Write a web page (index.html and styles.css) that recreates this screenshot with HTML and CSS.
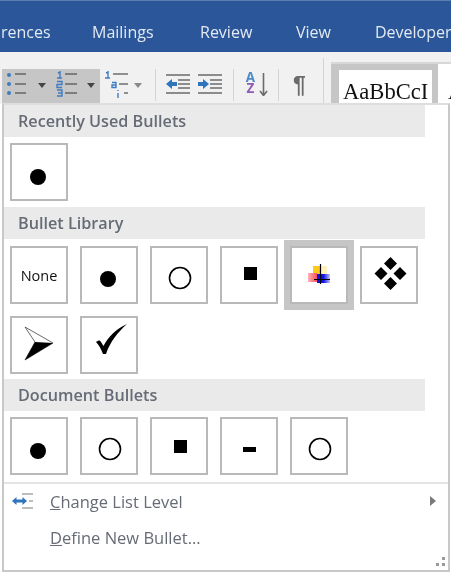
FILE: index.html
```html
<!DOCTYPE html>
<html lang="en">
<head>
<meta charset="utf-8">
<title>Bullet Library</title>
<link rel="stylesheet" href="styles.css">
</head>
<body>
<div class="tabs">
  <span class="tab tab-refs">rences</span>
  <span class="tab tab-mail">Mailings</span>
  <span class="tab tab-review">Review</span>
  <span class="tab tab-view">View</span>
  <span class="tab tab-dev">Developer</span>
</div>
<div class="ribbon">
  <div class="active-group">
    <svg class="icon" width="44" height="30" viewBox="0 0 44 30">
      <g fill="#3f7cc0"><circle cx="7" cy="6" r="2"/><circle cx="7" cy="15" r="2"/><circle cx="7" cy="24" r="2"/></g>
      <g stroke="#666" stroke-width="1.5"><path d="M13 5h11M13 15h11M13 24h11"/></g>
      <path d="M36 14h8l-4 5z" fill="#444"/>
    </svg>
    <svg class="icon icon-numbered" width="48" height="30" viewBox="0 0 48 30">
      <g fill="none" stroke="#3f7cc0" stroke-width="1.400"><path d="M2 4l2-1v6M1 9h5M1 12.500h5v3H1v3h5M1 21h5v3H2h4v3H1"/></g>
      <g stroke="#666" stroke-width="1.500"><path d="M9 5h12M9 15h12M9 24h12"/></g>
      <path d="M31 14h8l-4 5z" fill="#444"/>
    </svg>
  </div>
  <svg class="icon multi" width="44" height="30" viewBox="0 0 44 30">
    <g fill="none" stroke="#3f7cc0" stroke-width="1.400"><path d="M4 4l2-1v6M3 9h5M10 13.500h4v5h-4v-2.500h4M16 21v1M16 24v5"/></g>
    <g stroke="#6f6f6f" stroke-width="1.500"><path d="M11 5h15M17 15h9M22 24h4"/></g>
    <path d="M32 14h8l-4 5z" fill="#8a8a8a"/>
  </svg>
  <span class="sep sep-a"></span>
  <svg class="icon indent" width="24" height="20" viewBox="0 0 24 20">
    <g stroke="#6b6b6b" stroke-width="1.500"><path d="M0 1h24M12 6h12M12 10h12M12 14h12M0 19h24"/></g>
    <path d="M0 10l6-5v3h5v4H6v3z" fill="#2f75bb"/>
  </svg>
  <svg class="icon indent" width="24" height="20" viewBox="0 0 24 20">
    <g stroke="#6b6b6b" stroke-width="1.500"><path d="M0 1h24M12 6h12M12 10h12M12 14h12M0 19h24"/></g>
    <path d="M11 10L5 5v3H0v4h5v3z" fill="#2f75bb"/>
  </svg>
  <span class="sep sep-b"></span>
  <span class="sort">
    <span class="sort-letters"><span class="sort-a">A</span><span class="sort-z">Z</span></span>
    <svg class="sort-arrow" width="9" height="24" viewBox="0 0 9 24"><path d="M4.500 1v22M1 19l3.500 4.500L8 19" fill="none" stroke="#6b6b6b" stroke-width="1.600"/></svg>
  </span>
  <span class="sep sep-c"></span>
  <span class="pilcrow">¶</span>
  <span class="sep sep-d"></span>
  <div class="gallery">
    <div class="style-box"><span class="style-text">AaBbCcI</span></div>
    <span class="style-next">A</span>
  </div>
</div>

<div class="menu">
  <h2 class="heading">Recently Used Bullets</h2>
  <div class="cells">
    <div class="cell"><svg width="54" height="54" viewBox="0 0 54 54"><circle cx="26" cy="32" r="8"/></svg></div>
  </div>
  <h2 class="heading">Bullet Library</h2>
  <div class="cells cells-library">
    <div class="cell cell-none">None</div>
    <div class="cell"><svg width="54" height="54" viewBox="0 0 54 54"><circle cx="26" cy="31" r="8"/></svg></div>
    <div class="cell"><svg width="54" height="54" viewBox="0 0 54 54"><circle cx="28" cy="30" r="10.500" fill="none" stroke="#000" stroke-width="1.600"/></svg></div>
    <div class="cell"><svg width="54" height="54" viewBox="0 0 54 54"><rect x="22" y="19" width="13" height="13"/></svg></div>
    <div class="cell cell-selected"><svg width="54" height="54" viewBox="0 0 54 54">
      <defs>
        <linearGradient id="red"><stop offset="0" stop-color="#fdb4b8"/><stop offset="1" stop-color="#fb5058"/></linearGradient>
        <linearGradient id="blue"><stop offset="0" stop-color="#1010e8"/><stop offset=".5" stop-color="#1010e8"/><stop offset="1" stop-color="#c4c4fc"/></linearGradient>
      </defs>
      <rect x="21" y="18" width="7" height="8" fill="#fdc91c"/>
      <rect x="28" y="18" width="7" height="8" fill="#fff0bd"/>
      <rect x="16" y="25" width="9" height="9" fill="url(#red)"/>
      <rect x="25" y="26" width="13" height="9" fill="url(#blue)"/>
      <path d="M28.500 16v20M22 31.500h16" stroke="#000" stroke-width="1.200"/>
    </svg></div>
    <div class="cell"><svg width="54" height="54" viewBox="0 0 54 54">
      <path d="M28.500 9l6.500 6.500-6.500 6.500-6.500-6.500zM19 19l6.500 6.500L19 32l-6.500-6.500zM38 19l6.500 6.500L38 32l-6.500-6.500zM28.500 29l6.500 6.500-6.500 6.500-6.500-6.500z"/>
    </svg></div>
    <div class="cell"><svg width="54" height="54" viewBox="0 0 54 54">
      <path d="M13 9L41 25L13 42L23 24Z" fill="#fff" stroke="#444" stroke-width=".8"/>
      <path d="M23 24L41 25L13 42Z"/>
    </svg></div>
    <div class="cell"><svg width="54" height="54" viewBox="0 0 54 54">
      <path d="M14 24c2-2 4-2 5 0l2.500 4C26 19 34 11 45 6 36 14 28 24 24 36h-3C19 31 17 27 14 24z"/>
    </svg></div>
  </div>
  <h2 class="heading">Document Bullets</h2>
  <div class="cells">
    <div class="cell"><svg width="54" height="54" viewBox="0 0 54 54"><circle cx="26" cy="32" r="8"/></svg></div>
    <div class="cell"><svg width="54" height="54" viewBox="0 0 54 54"><circle cx="28" cy="30" r="10.500" fill="none" stroke="#000" stroke-width="1.600"/></svg></div>
    <div class="cell"><svg width="54" height="54" viewBox="0 0 54 54"><rect x="22" y="21" width="13" height="13"/></svg></div>
    <div class="cell"><svg width="54" height="54" viewBox="0 0 54 54"><rect x="21" y="28" width="13" height="5"/></svg></div>
    <div class="cell"><svg width="54" height="54" viewBox="0 0 54 54"><circle cx="28" cy="30" r="10.500" fill="none" stroke="#000" stroke-width="1.600"/></svg></div>
  </div>
  <div class="actions">
    <div class="action">
      <svg class="action-icon" width="22" height="16" viewBox="0 0 22 16">
        <g stroke="#7a7a7a" stroke-width="1"><path d="M10 1h11M17 8h4M10 15h11"/></g>
        <path d="M0 8l4.500-4v2.500h6V4L15 8l-4.500 4V9.500h-6V12z" fill="#2f75bb"/>
      </svg>
      <span class="action-label"><u>C</u>hange List Level</span>
      <span class="arrow"></span>
    </div>
    <div class="action">
      <span class="action-label action-plain"><u>D</u>efine New Bullet...</span>
    </div>
  </div>
  <svg class="grip" width="10" height="10" viewBox="0 0 10 10"><g fill="#9a9a9a"><rect x="6" y="0" width="3" height="3"/><rect x="0" y="6" width="3" height="3"/><rect x="6" y="6" width="3" height="3"/></g></svg>
</div>
</body>
</html>
```

FILE: styles.css
```css
* { box-sizing: border-box; }
html, body { margin: 0; padding: 0; }
body {
  position: relative;
  width: 452px;
  height: 573px;
  overflow: hidden;
  background: #fff;
  font-family: "Open Sans", "Noto Sans", sans-serif;
  filter: blur(0.35px);
}
.tabs {
  display: flex;
  align-items: center;
  width: 451px;
  height: 52px;
  padding-top: 10px;
  background: #2b579a;
  border-top: 1px solid #5a7db0;
  overflow: hidden;
  white-space: nowrap;
  color: #e3e9f2;
  font-size: 16px;
}
.tab { flex: none; }
.tab-refs { width: 92px; padding-left: 1px; }
.tab-mail { width: 108px; }
.tab-review { width: 96px; }
.tab-view { width: 79px; }
.ribbon {
  display: flex;
  align-items: flex-start;
  width: 451px;
  height: 52px;
  background: #f1f1f1;
  overflow: hidden;
}
.icon { flex: none; }
.active-group {
  display: flex;
  flex: none;
  align-items: flex-start;
  width: 98px;
  height: 34px;
  margin: 17px 0 0 2px;
  background: #c6c6c6;
}
.icon-numbered { margin-left: 10px; }
.multi { margin: 17px 0 0 2px; }
.sep { flex: none; width: 1px; height: 32px; margin-top: 17px; background: #d4d4d4; }
.sep-a { margin-left: 9px; margin-right: 10px; }
.indent { margin: 22px 8px 0 0; }
.sep-b { margin-left: 3px; margin-right: 12px; }
.sort { display: flex; flex: none; margin-top: 20px; gap: 4px; width: 32px; }
.sort-letters { display: flex; flex-direction: column; align-items: center; width: 9px; font: bold 13.500px/11px "Open Sans", sans-serif; }
.sort-a { color: #4d8ac9; }
.sort-z { color: #8e5cb5; }
.sep-c { margin-right: 14px; }
.pilcrow { flex: none; width: 30px; margin-top: 17px; color: #6b6b6b; font: bold 23px/32px "Liberation Sans", sans-serif; }
.sep-d { height: 46px; margin-top: 6px; }
.gallery {
  display: flex;
  flex: none;
  width: 120px;
  height: 46px;
  margin: 10px 0 0 7px;
  background: #fff;
  border-top: 2px solid #d8d8d8;
}
.style-box {
  flex: none;
  width: 107px;
  height: 44px;
  padding: 9px 0 0 4px;
  background: #fff;
  border: solid #c6c6c6;
  border-width: 6px 6px 0 8px;
}
.style-text { display: block; color: #111; font: 22.600px/26px "Liberation Serif", serif; white-space: nowrap; }
.style-next { margin: 15px 0 0 10px; color: #111; font: 22.600px/26px "Liberation Serif", serif; }
.menu {
  position: absolute;
  left: 2px;
  top: 103px;
  width: 448px;
  height: 469px;
  background: #fff;
  border: 2px solid #c8c8c8;
  border-top-color: #dedede;
}
.heading {
  display: flex;
  align-items: center;
  width: 421px;
  height: 32px;
  margin: 0;
  padding-left: 14px;
  background: #eaeaea;
  color: #666b75;
  font-size: 16.200px;
  font-weight: 600;
}
.cells {
  display: flex;
  flex-wrap: wrap;
  gap: 12px;
  padding: 6px 0 6px 6px;
}
.cells-library { padding-top: 7px; padding-bottom: 5px; }
.cell {
  display: flex;
  align-items: center;
  justify-content: center;
  width: 58px;
  height: 58px;
  border: 2px solid #b9b9b9;
  background: #fff;
}
.cell-none { padding-bottom: 0; color: #111; font: 14.500px "Open Sans", sans-serif; }
.cell-selected { box-shadow: 0 0 0 6px #c6c6c6; }
.actions {
  display: flex;
  flex-direction: column;
  width: 444px;
  margin-top: 1px;
  border-top: 2px solid #e4e4e4;
}
.action {
  display: flex;
  align-items: center;
  height: 36px;
  color: #666b75;
  font-size: 16.500px;
}
.action:first-child { margin-top: -1px; }
.action-icon { flex: none; margin: 0 16px 0 8px; }
.action-label { flex: none; }
.action-plain { margin-left: 46px; }
.arrow {
  width: 0;
  height: 0;
  margin-left: auto;
  margin-right: 12px;
  border-style: solid;
  border-width: 5px 0 5px 6px;
  border-color: transparent transparent transparent #7a7a7a;
}
.grip { position: absolute; right: 2px; bottom: 3px; }
```
